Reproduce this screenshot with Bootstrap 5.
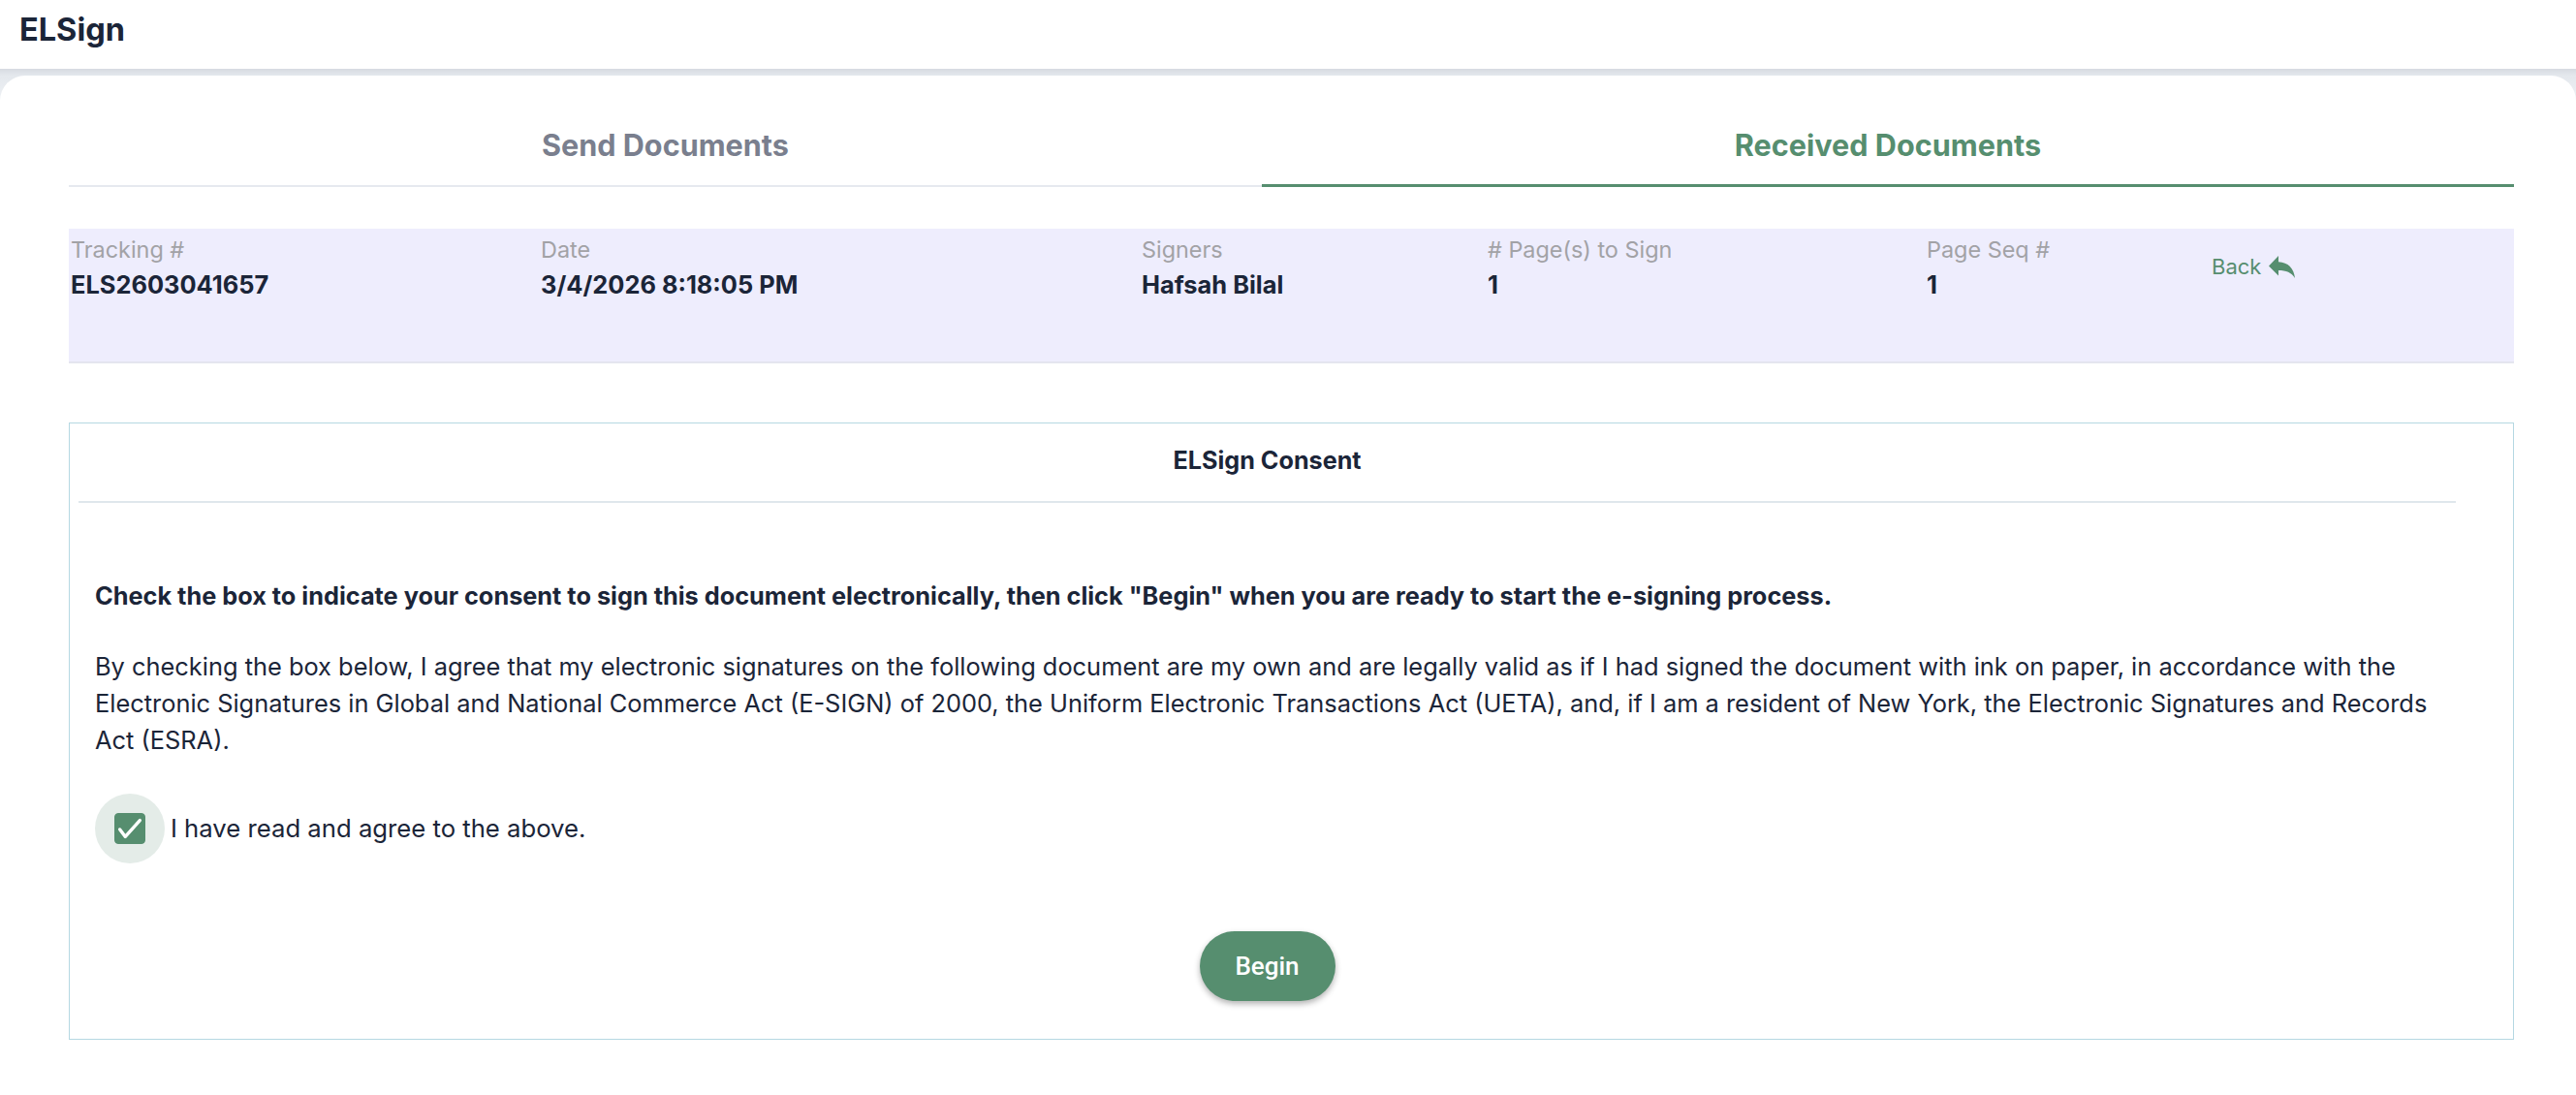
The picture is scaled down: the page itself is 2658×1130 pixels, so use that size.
<!DOCTYPE html>
<html lang="en">
<head>
<meta charset="utf-8">
<title>ELSign</title>
<link rel="stylesheet" href="https://cdn.jsdelivr.net/npm/bootstrap@5.3.0/dist/css/bootstrap.min.css">
<style>
html,body{height:100%}
body{background:#fff;color:#1b2538;font-family:"Inter","Liberation Sans",sans-serif;font-size:25px;overflow:hidden}
.top-bar{height:71px;background:#fff;padding:0 20px 9px;position:relative;z-index:2;box-shadow:none}
.top-bar .navbar-brand{font-size:32.5px;font-weight:700;color:#1b2538;padding:0;margin:0}
.shell{background:linear-gradient(#d6dae1 0,#e4e8ed 7px,#eff2f5 36px);padding-top:7px;min-height:calc(100vh - 71px)}
.sheet{background:#fff;border-radius:26px 26px 0 0;padding:0 64px 0 71px;min-height:1052px}
.doc-tabs{border-bottom:0}
.doc-tabs .nav-link{height:115px;padding:49px 0 0;font-size:30.6px;line-height:45px;font-weight:700;color:#7a7f8e;border:0;border-bottom:2px solid #e6e9ef;border-radius:0;background:none}
.doc-tabs .nav-link.active{color:#568e6f;border-bottom:3px solid #568e6f}
.info-band{margin-top:43px;height:139px;background:#eeedfd;border-bottom:2px solid #e4e5ef;display:grid;grid-template-columns:485px 620px 357px 453px 293px 1fr;padding:5px 0 0 2px}
.info-label{font-size:23.4px;line-height:34px;color:#a2a2a6}
.info-value{font-size:25.4px;line-height:38px;font-weight:700}
.back-link{font-size:22px;line-height:28px;color:#568e6f;text-decoration:none;display:inline-flex;align-items:center;gap:8px;margin:20px 0 0 1px}
.back-link svg{width:27px;height:23px;fill:#568e6f}
.consent-box{margin-top:61px;height:637px;border:1px solid #b5d8e2;padding:0 9px}
.consent-title{height:82px;width:2453px;margin:0;border-bottom:2px solid #dfe7ec;font-size:25.2px;font-weight:700;line-height:44px;padding-top:16px;text-align:center}
.consent-body{padding:0 17px}
.lead-note{margin:77px 0 0;font-size:25.3px;line-height:38px;font-weight:700}
.legal-note{margin:35px 0 0;padding-right:40px;font-size:25.4px;line-height:38px}
.agree-row{margin:36px 0 0;padding:0;min-height:0;display:flex;align-items:center;gap:6px}
.check-halo{width:72px;height:72px;background:#e4ece8;flex:none}
.agree-row .form-check-input{float:none;margin:0;width:32px;height:32px;border-radius:4px;background-color:#568e6f;border-color:#568e6f;box-shadow:none;background-size:100% 100%;background-image:url("data:image/svg+xml,%3Csvg xmlns='http://www.w3.org/2000/svg' viewBox='0 0 32 32'%3E%3Cpath fill='none' stroke='%23fff' stroke-width='3.6' stroke-linecap='round' stroke-linejoin='round' d='M5 17l6 8L27 7'/%3E%3C/svg%3E")}
.agree-row .form-check-label{font-size:25.7px;line-height:38px}
.begin-btn{width:140px;height:72px;border-radius:36px;background:#568e6f;border:0;color:#fff;font-family:"Roboto","Liberation Sans",sans-serif;font-size:26px;font-weight:500;box-shadow:0 3px 6px rgba(0,0,0,.3)}
.begin-wrap{margin-top:70px;padding-right:50px}
</style>
</head>
<body>
<nav class="navbar top-bar"><span class="navbar-brand">ELSign</span></nav>
<div class="shell">
  <main class="sheet">
    <ul class="nav nav-fill doc-tabs">
      <li class="nav-item"><a class="nav-link" href="#">Send Documents</a></li>
      <li class="nav-item"><a class="nav-link active" href="#">Received Documents</a></li>
    </ul>
    <section class="info-band">
      <div><div class="info-label">Tracking #</div><div class="info-value">ELS2603041657</div></div>
      <div><div class="info-label">Date</div><div class="info-value">3/4/2026 8:18:05 PM</div></div>
      <div><div class="info-label">Signers</div><div class="info-value">Hafsah Bilal</div></div>
      <div><div class="info-label"># Page(s) to Sign</div><div class="info-value">1</div></div>
      <div><div class="info-label">Page Seq #</div><div class="info-value">1</div></div>
      <div><a class="back-link" href="#">Back <svg viewBox="0 0 27 23" aria-hidden="true"><path d="M0 10.5 10 0v6.2C20 6.6 26 13 27 23c-3.6-5.8-9-8-17-8v5.5z"/></svg></a></div>
    </section>
    <section class="consent-box">
      <h2 class="consent-title">ELSign Consent</h2>
      <div class="consent-body">
        <p class="lead-note">Check the box to indicate your consent to sign this document electronically, then click "Begin" when you are ready to start the e-signing process.</p>
        <p class="legal-note">By checking the box below, I agree that my electronic signatures on the following document are my own and are legally valid as if I had signed the document with ink on paper, in accordance with the Electronic Signatures in Global and National Commerce Act (E-SIGN) of 2000, the Uniform Electronic Transactions Act (UETA), and, if I am a resident of New York, the Electronic Signatures and Records Act (ESRA).</p>
        <div class="form-check agree-row">
          <span class="check-halo rounded-circle d-flex align-items-center justify-content-center"><input class="form-check-input" type="checkbox" id="agree" checked></span>
          <label class="form-check-label" for="agree">I have read and agree to the above.</label>
        </div>
        <div class="text-center begin-wrap"><button type="button" class="btn begin-btn">Begin</button></div>
      </div>
    </section>
  </main>
</div>
<script src="https://cdn.jsdelivr.net/npm/bootstrap@5.3.0/dist/js/bootstrap.bundle.min.js"></script>
</body>
</html>
